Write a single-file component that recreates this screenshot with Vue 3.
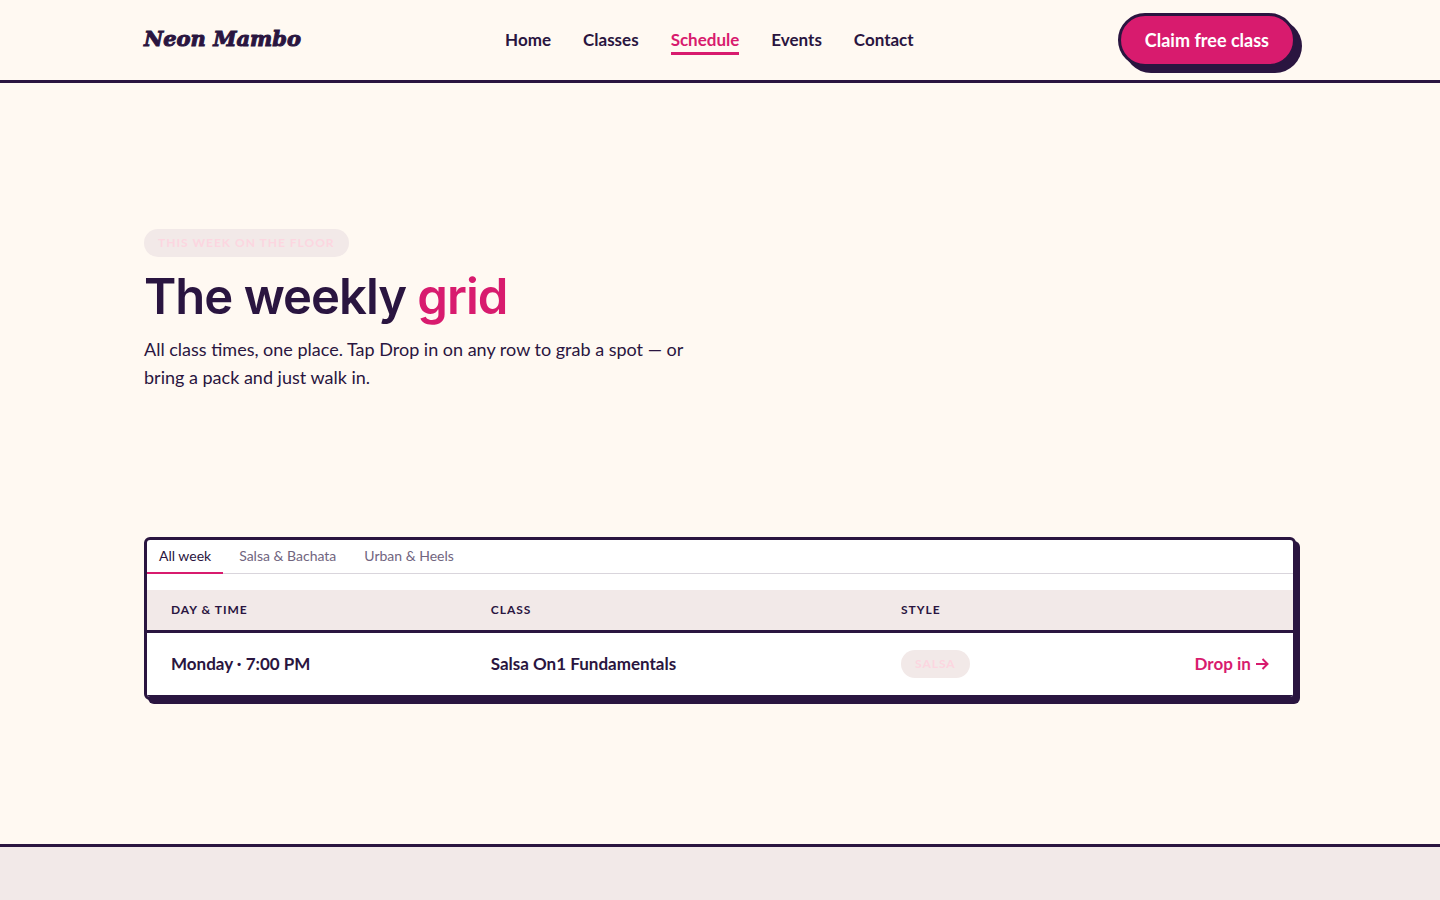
<script setup>
import { ref, computed } from 'vue'

const links = ['Home', 'Classes', 'Schedule', 'Events', 'Contact']
const tabs = ['All week', 'Salsa & Bachata', 'Urban & Heels']
const activeTab = ref('All week')
const classes = [
  { time: 'Monday · 7:00 PM', name: 'Salsa On1 Fundamentals', style: 'Salsa', group: 'Salsa & Bachata' },
]
const rows = computed(() =>
  classes.filter((c) => activeTab.value === 'All week' || c.group === activeTab.value)
)
</script>

<template>
  <div class="page">
    <header class="site-header">
      <div class="container bar">
        <a class="logo" href="#">Neon Mambo</a>
        <nav class="nav" aria-label="Main">
          <a
            v-for="link in links"
            :key="link"
            href="#"
            :class="{ active: link === 'Schedule' }"
            :aria-current="link === 'Schedule' ? 'page' : undefined"
          >{{ link }}</a>
        </nav>
        <button class="claim" type="button">Claim free class</button>
      </div>
    </header>

    <main>
      <section class="container hero">
        <span class="pill">This week on the floor</span>
        <h1>The weekly <em>grid</em></h1>
        <p>All class times, one place. Tap Drop in on any row to grab a spot — or bring a pack and just walk in.</p>
      </section>

      <section class="container schedule">
        <div class="card">
          <div class="tabs" role="tablist">
            <button
              v-for="tab in tabs"
              :key="tab"
              type="button"
              role="tab"
              :aria-selected="tab === activeTab"
              :class="{ active: tab === activeTab }"
              @click="activeTab = tab"
            >{{ tab }}</button>
          </div>
          <table>
            <thead>
              <tr>
                <th class="col-time" scope="col">Day &amp; time</th>
                <th class="col-class" scope="col">Class</th>
                <th scope="col">Style</th>
                <td></td>
              </tr>
            </thead>
            <tbody>
              <tr v-for="row in rows" :key="row.time">
                <td>{{ row.time }}</td>
                <td>{{ row.name }}</td>
                <td><span class="pill">{{ row.style }}</span></td>
                <td class="action">
                  <a href="#">
                    Drop in
                    <svg width="14" height="12" viewBox="0 0 14 12" aria-hidden="true">
                      <path d="M1 6h11M7.500 1 12.500 6l-5 5" fill="none" stroke="currentColor" stroke-width="2" />
                    </svg>
                  </a>
                </td>
              </tr>
            </tbody>
          </table>
        </div>
      </section>
    </main>

    <footer class="site-footer"></footer>
  </div>
</template>

<style>
body {
  margin: 0;
  background: #fff9f2;
}
</style>

<style scoped>
.page {
  --ink: #2a1540;
  --pink: #d81b6e;
  --mist: #f2e9e8;
  display: flex;
  flex-direction: column;
  min-height: 100vh;
  overflow: hidden;
  color: var(--ink);
  background: #fff9f2;
  font-family: Lato, "Open Sans", sans-serif;
  font-size: 18px;
  line-height: 28px;
}
.page *,
.page {
  box-sizing: border-box;
}
a {
  color: inherit;
  text-decoration: none;
}
button {
  font-family: inherit;
  cursor: pointer;
}
.container {
  width: 80%;
  margin: 0 auto;
}
.site-header {
  border-bottom: 3px solid var(--ink);
}
.bar {
  display: flex;
  align-items: center;
  justify-content: space-between;
  min-height: 80px;
}
.logo {
  padding-bottom: 2px;
  font: italic 900 21px/28px "DejaVu Serif", "Liberation Serif", serif;
  -webkit-text-stroke: 1px var(--ink);
}
.nav {
  display: flex;
  gap: 32px;
  font-size: 17px;
  font-weight: 700;
  line-height: 24px;
}
.nav a {
  padding-top: 3px;
  border-bottom: 3px solid transparent;
}
.nav .active {
  color: var(--pink);
  border-color: var(--pink);
}
.claim {
  padding: 12px 24px;
  border: 3px solid var(--ink);
  border-radius: 27px;
  color: #fff;
  background: var(--pink);
  box-shadow: 6px 6px 0 var(--ink);
  font-size: 18px;
  font-weight: 700;
  line-height: 24px;
}
.hero {
  padding: 146px 0;
}
.pill {
  display: inline-block;
  padding: 4px 14px;
  border-radius: 14px;
  color: #fcd6e0;
  background: var(--mist);
  font-size: 12px;
  font-weight: 700;
  line-height: 20px;
  letter-spacing: 1px;
  text-transform: uppercase;
  vertical-align: top;
}
h1 {
  margin: 12px 0 11px;
  font: 600 49px/55px Inter, sans-serif;
  letter-spacing: -1px;
}
h1 em {
  color: var(--pink);
  font-style: normal;
}
.hero p {
  max-width: 560px;
  margin: 0;
}
.schedule {
  padding-bottom: 144px;
}
.card {
  overflow: hidden;
  border: 3px solid var(--ink);
  border-radius: 6px;
  background: #fff;
  box-shadow: 4px 4px 0 var(--ink);
}
.tabs {
  display: flex;
  gap: 4px;
  margin-bottom: 16px;
  box-shadow: inset 0 -1px 0 #d9d5dc;
}
.tabs button {
  padding: 6px 12px;
  border: 0;
  border-bottom: 2px solid transparent;
  color: #716580;
  background: none;
  font-size: 14px;
  line-height: 20px;
}
.tabs .active {
  color: var(--ink);
  border-color: var(--pink);
}
table {
  width: 100%;
  border-collapse: separate;
  border-spacing: 0;
  table-layout: fixed;
  text-align: left;
}
.col-time {
  width: 27.9%;
}
.col-class {
  width: 35.8%;
}
th,
thead td {
  padding: 10px 24px;
  border-bottom: 3px solid var(--ink);
  background: var(--mist);
  font-size: 12px;
  line-height: 20px;
  letter-spacing: 1px;
  text-transform: uppercase;
}
tbody td {
  padding: 17px 24px;
  border-bottom: 2px solid var(--ink);
  font-size: 17px;
  font-weight: 700;
}
tbody .action {
  color: var(--pink);
  text-align: right;
}
.site-footer {
  flex: 1;
  min-height: 56px;
  border-top: 3px solid var(--ink);
  background: var(--mist);
}
</style>
